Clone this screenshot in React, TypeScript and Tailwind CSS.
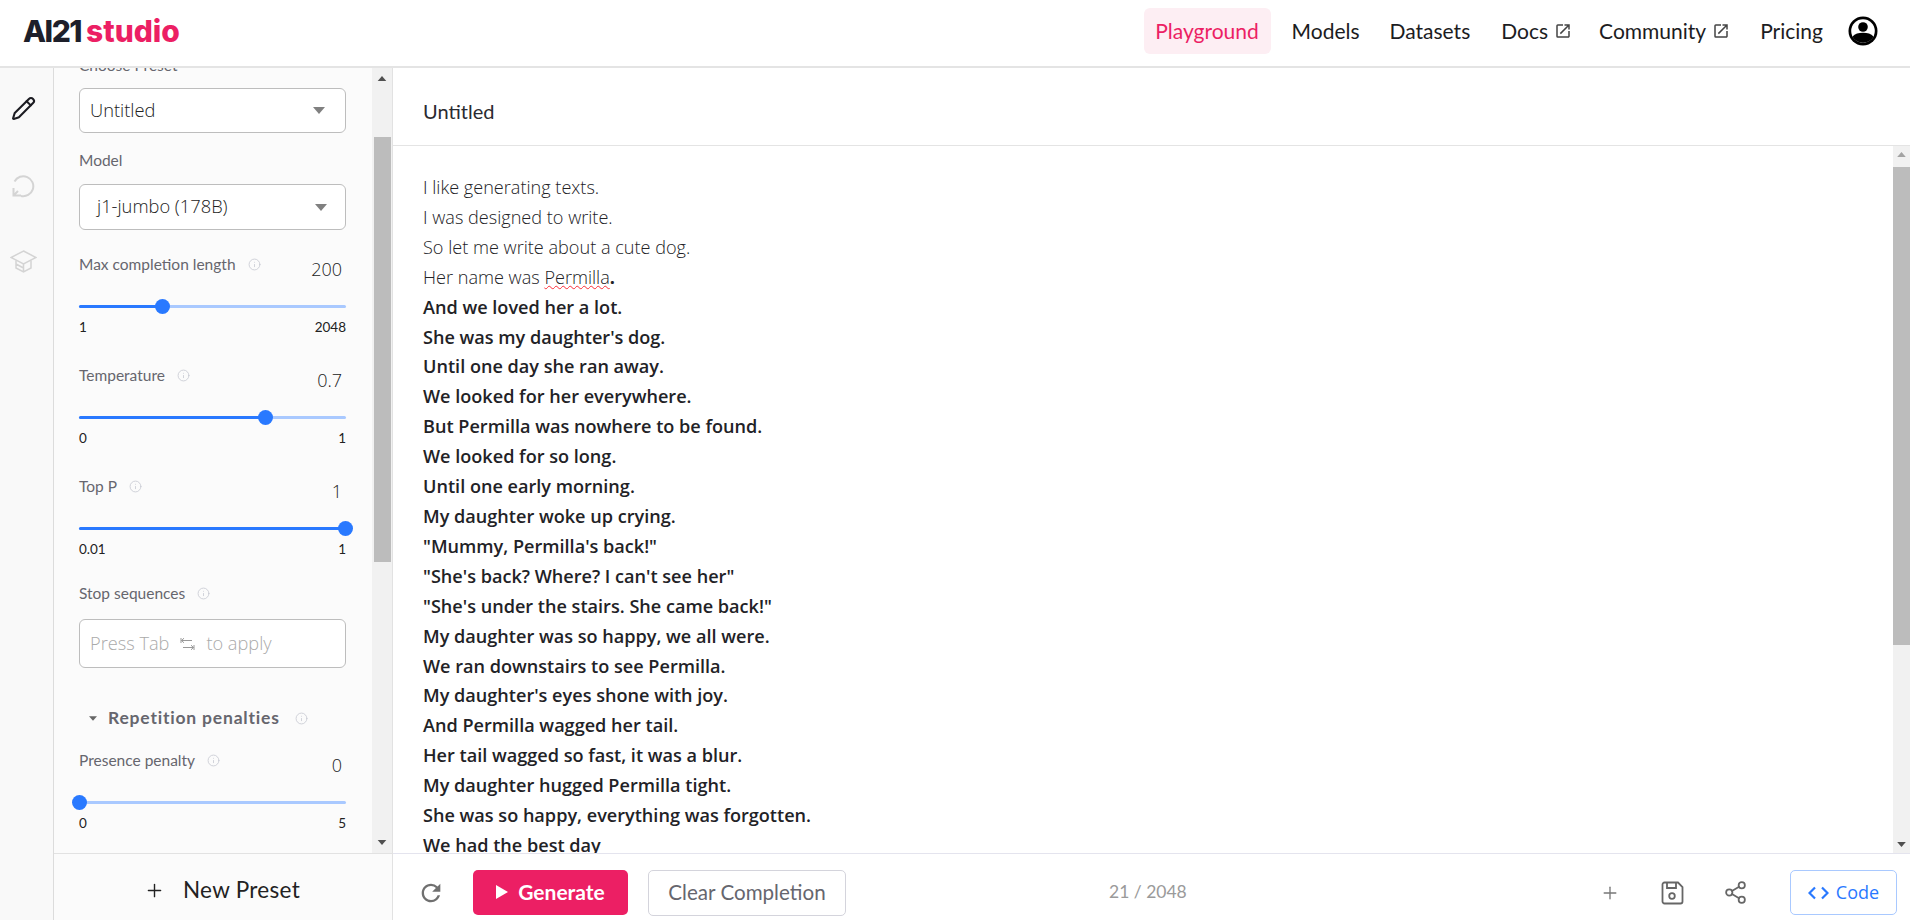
import React from "react";
import { Pencil, Plus, Share2, Info } from "lucide-react";
import { MdOpenInNew, MdRefresh } from "react-icons/md";

const OPEN = "font-['Open_Sans','Noto_Sans',sans-serif]";
const LABEL = "text-[15.5px] leading-[20px] text-[#66666e]";

function Caret({ className }: { className?: string }) {
  return (
    <svg width="12" height="7" viewBox="0 0 12 7" className={className}>
      <path d="M0 0h12L6 7z" fill="currentColor" />
    </svg>
  );
}

function InfoDot() {
  return <Info size={13} strokeWidth={1.5} className="text-[#c6c9d2] ml-[12px] mt-[4px] shrink-0" />;
}

function Slider({ value, min, max, label, pct }: { value: string; min: string; max: string; label: string; pct: number }) {
  return (
    <div className="h-[81px]">
      <div className="flex justify-between h-[30px] -mt-[1px]">
        <div className={`flex items-start ${LABEL}`}>
          <span>{label}</span>
          <InfoDot />
        </div>
        <div className={`${OPEN} text-[18px] leading-[30px] font-light text-[#222] pr-[4px]`}>{value}</div>
      </div>
      <div className="relative h-[3px] mt-[21px] bg-[#a9c9ff] rounded-full">
        <div className="h-full bg-[#2979ff] rounded-full" style={{ width: `${pct}%` }} />
        <div
          className="absolute top-[-6px] w-[15px] h-[15px] -ml-[7.5px] rounded-full bg-[#2979ff]"
          style={{ left: `${pct}%` }}
        />
      </div>
      <div className="flex justify-between mt-[11px] text-[13.5px] leading-[16px] text-[#222]">
        <span>{min}</span>
        <span>{max}</span>
      </div>
    </div>
  );
}

function SelectBox({ text, h, pl, caretPr }: { text: string; h: string; pl: string; caretPr: string }) {
  return (
    <div className={`flex items-center justify-between border border-[#bdbdbd] rounded-[6px] bg-white ${h} ${pl} ${caretPr}`}>
      <span className={`${OPEN} text-[18.3px] font-light text-[#222] pb-[2px]`}>{text}</span>
      <Caret className="text-[#808080]" />
    </div>
  );
}

const plain = ["I like generating texts.", "I was designed to write.", "So let me write about a cute dog."];
const bold = [
  "And we loved her a lot.",
  "She was my daughter's dog.",
  "Until one day she ran away.",
  "We looked for her everywhere.",
  "But Permilla was nowhere to be found.",
  "We looked for so long.",
  "Until one early morning.",
  "My daughter woke up crying.",
  "\"Mummy, Permilla's back!\"",
  "\"She's back? Where? I can't see her\"",
  "\"She's under the stairs. She came back!\"",
  "My daughter was so happy, we all were.",
  "We ran downstairs to see Permilla.",
  "My daughter's eyes shone with joy.",
  "And Permilla wagged her tail.",
  "Her tail wagged so fast, it was a blur.",
  "My daughter hugged Permilla tight.",
  "She was so happy, everything was forgotten.",
  "We had the best day",
];

function NavLink({ children, ext, gap }: { children: React.ReactNode; ext?: boolean; gap: string }) {
  return (
    <span className={`flex items-center text-[21px] text-[#1c1c22] ${gap}`}>
      {children}
      {ext && <MdOpenInNew size={18} className="ml-[6px] text-[#444]" />}
    </span>
  );
}

export default function App() {
  return (
    <div className="w-[1910px] h-[920px] flex flex-col overflow-hidden bg-white font-['Lato','Liberation_Sans',sans-serif]">
      <header className="h-[68px] shrink-0 border-b-2 border-[#e4e4e4] flex items-center pl-[23px] pb-[4px] bg-white">
        <div className="flex items-baseline font-['Inter',sans-serif] font-extrabold text-[30px] leading-none tracking-[-1.5px]">
          <span className="text-[#1d1f2a]">AI21</span>
          <span className="text-[#ec1f64] ml-[5px] tracking-[0px]">studio</span>
        </div>
        <nav className="ml-auto flex items-center">
          <span className="h-[46px] w-[127px] rounded-[6px] bg-[#fdeef3] text-[#ec1f64] text-[21px] flex items-center justify-center mr-[21px]">
            Playground
          </span>
          <NavLink gap="mr-[30px]">Models</NavLink>
          <NavLink gap="mr-[31px]">Datasets</NavLink>
          <NavLink ext gap="mr-[27px]">Docs</NavLink>
          <NavLink ext gap="mr-[30px]">Community</NavLink>
          <NavLink gap="mr-[25px]">Pricing</NavLink>
          <svg width="30" height="30" viewBox="0 0 30 30" className="mr-[32px]">
            <circle cx="15" cy="15" r="14.500" fill="#000" />
            <circle cx="15" cy="15" r="11.800" fill="#fff" />
            <circle cx="15" cy="11" r="4.800" fill="#000" />
            <path d="M4.500 20.500c2.500-2.800 6-3.800 10.500-3.800s8 1 10.500 3.800c-2 4-6 6.200-10.500 6.200s-8.500-2.200-10.500-6.200z" fill="#000" />
          </svg>
        </nav>
      </header>

      <div className="flex-1 flex min-h-0">
        <aside className="w-[54px] shrink-0 bg-[#f9f9f9] border-r border-[#dcdcdc] flex flex-col items-center pr-[7px] pt-[28px]">
          <Pencil size={25} strokeWidth={2} className="text-[#1c1c22]" />
          <svg width="24" height="24" viewBox="0 0 24 24" fill="none" stroke="#d4d4d4" strokeWidth="2" className="mt-[53px]">
            <path d="M3.500 7.500A10 10 0 1 1 10 22" />
            <path d="M2.500 14v7.500H10M2.500 21.500l4.500-4.500" />
          </svg>
          <svg width="27" height="23" viewBox="0 0 27 23" fill="none" stroke="#d4d4d4" strokeWidth="1.500" className="mt-[52px]">
            <path d="M13.500 1 26 7.500 13.500 14 1 7.500z" />
            <path d="M6 10.500V18l7.500 4 7.500-4v-7.500M13.500 14v8M6 14l7.500 4" />
          </svg>
        </aside>

        <div className="w-[339px] shrink-0 flex flex-col border-r border-[#e2e2e2] bg-[#fbfbfb]">
          <div className="flex h-[786px] border-b border-[#e2e2e2]">
            <div className="w-[318px] overflow-hidden pl-[25px] pr-[26px]">
              <div className={`-mt-[13px] h-[20px] ${LABEL}`}>Choose Preset</div>
              <div className="mt-[13px]">
                <SelectBox text="Untitled" h="h-[45px]" pl="pl-[10px]" caretPr="pr-[20px]" />
              </div>
              <div className={`mt-[17px] h-[20px] ${LABEL}`}>Model</div>
              <div className="mt-[14px]">
                <SelectBox text="j1-jumbo (178B)" h="h-[46px]" pl="pl-[17px]" caretPr="pr-[18px]" />
              </div>
              <div className="mt-[25px] flex flex-col gap-[30px]">
                <Slider label="Max completion length" value="200" min="1" max="2048" pct={31.3} />
                <Slider label="Temperature" value="0.7" min="0" max="1" pct={70} />
                <Slider label="Top P" value="1" min="0.01" max="1" pct={99.7} />
              </div>
              <div className={`mt-[25px] flex h-[20px] ${LABEL}`}>
                <span>Stop sequences</span>
                <InfoDot />
              </div>
              <div className="mt-[16px] h-[49px] border border-[#bdbdbd] rounded-[6px] bg-white flex items-center pl-[10px]">
                <span className={`${OPEN} text-[18.200px] font-light text-[#aaa] pt-[1px]`}>Press Tab</span>
                <svg width="15" height="14" viewBox="0 0 15 14" fill="none" stroke="#999" strokeWidth="1" className="ml-[11px]">
                  <path d="M1 1v5M1.500 3.500H12M4 1.200 1.500 3.500 4 5.800M14 8v5M13.500 10.500H3M11 8.200l2.500 2.300-2.500 2.300" />
                </svg>
                <span className={`${OPEN} text-[18.200px] font-light text-[#aaa] ml-[11px] pt-[1px]`}>to apply</span>
              </div>
              <div className="mt-[40px] h-[20px] flex items-center pl-[10px]">
                <Caret className="text-[#666] w-[8px] h-[5px]" />
                <span className="ml-[11px] text-[17.500px] font-bold text-[#66666e] tracking-[0.8px]">Repetition penalties</span>
                <Info size={13} strokeWidth={1.5} className="text-[#c6c9d2] ml-[15px]" />
              </div>
              <div className="mt-[23px]">
                <Slider label="Presence penalty" value="0" min="0" max="5" pct={0} />
              </div>
            </div>
            <div className="w-[20px] bg-[#f1f1f1] flex flex-col items-center pt-[8px] pb-[8px]">
              <Caret className="text-[#505050] w-[10px] h-[5px] rotate-180" />
              <div className="w-[17px] h-[425px] bg-[#bcbcbc] mt-[56px]" />
              <Caret className="text-[#505050] w-[10px] h-[5px] mt-auto" />
            </div>
          </div>
          <div className="flex-1 flex items-center justify-center pr-[2px] pt-[6px]">
            <Plus size={21} strokeWidth={1.6} className="text-[#222]" />
            <span className="ml-[18px] text-[22.500px] text-[#222] tracking-[0.3px]">New Preset</span>
          </div>
        </div>

        <main className="flex-1 min-w-0 flex flex-col">
          <div className="h-[78px] shrink-0 border-b border-[#e4e4e4] flex items-center pl-[30px]">
            <span className="text-[20px] text-[#2a2a30] pt-[9px]">Untitled</span>
          </div>
          <div className="h-[708px] shrink-0 flex border-b border-[#e4e4ee]">
            <div className={`flex-1 overflow-hidden pl-[30px] pt-[27px] ${OPEN} text-[18.100px] leading-[29.900px] text-[#222226]`}>
              {plain.map((t) => (
                <div key={t} className="font-light">{t}</div>
              ))}
              <div className="font-light">
                Her name was{" "}
                <span className="underline decoration-wavy decoration-red-500 decoration-1">Permilla</span>
                <span className="font-bold">.</span>
              </div>
              {bold.map((t) => (
                <div key={t} className="font-semibold">{t}</div>
              ))}
            </div>
            <div className="w-[17px] bg-[#f1f1f1] flex flex-col items-center pt-[6px] pb-[6px]">
              <Caret className="text-[#a3a3a3] w-[9px] h-[5px] rotate-180" />
              <div className="w-[17px] h-[478px] bg-[#bcbcbc] mt-[10px]" />
              <Caret className="text-[#505050] w-[9px] h-[5px] mt-auto" />
            </div>
          </div>
          <div className="flex-1 flex items-center pl-[26px] pr-[13px] pt-[11px]">
            <MdRefresh size={28} className="text-[#707070] -ml-[2px]" />
            <button className="ml-[28px] w-[155px] h-[45px] rounded-[5px] bg-[#ec1f64] text-white flex items-center justify-center text-[21px] font-bold pb-[1px]">
              <svg width="12" height="14" viewBox="0 0 12 14"><path d="M0 0l12 7-12 7z" fill="#fff" /></svg>
              <span className="ml-[10px]">Generate</span>
            </button>
            <button className="ml-[20px] w-[198px] h-[46px] rounded-[5px] border border-[#d4d4dc] text-[#66666e] text-[20.600px] pb-[1px]">
              Clear Completion
            </button>
            <span className="ml-[263px] text-[17.500px] text-[#9a9a9a]">21 / 2048</span>
            <div className="ml-auto flex items-center">
              <Plus size={20} strokeWidth={1.6} className="text-[#777]" />
              <svg width="24" height="24" viewBox="0 0 24 24" fill="none" stroke="#666" strokeWidth="1.800" className="ml-[40px]">
                <path d="M4.500 1.500H18l4.500 4.500v14.500a2 2 0 0 1-2 2h-16a2 2 0 0 1-2-2v-17a2 2 0 0 1 2-2z" />
                <path d="M7 1.500V7h9V1.500" />
                <circle cx="12" cy="15" r="2.800" />
              </svg>
              <Share2 size={25} strokeWidth={1.7} className="text-[#666] ml-[39px]" />
              <button className={`ml-[42px] w-[107px] h-[45px] rounded-[5px] border border-[#a9c9ff] text-[#2979ff] text-[18px] flex items-center justify-center ${OPEN}`}>
                <svg width="21" height="14" viewBox="0 0 21 14" fill="none" stroke="#2979ff" strokeWidth="2.200" className="mr-[7px]">
                  <path d="M7 1.500 1.500 7 7 12.500M14 1.500 19.500 7 14 12.500" />
                </svg>
                Code
              </button>
            </div>
          </div>
        </main>
      </div>
    </div>
  );
}
